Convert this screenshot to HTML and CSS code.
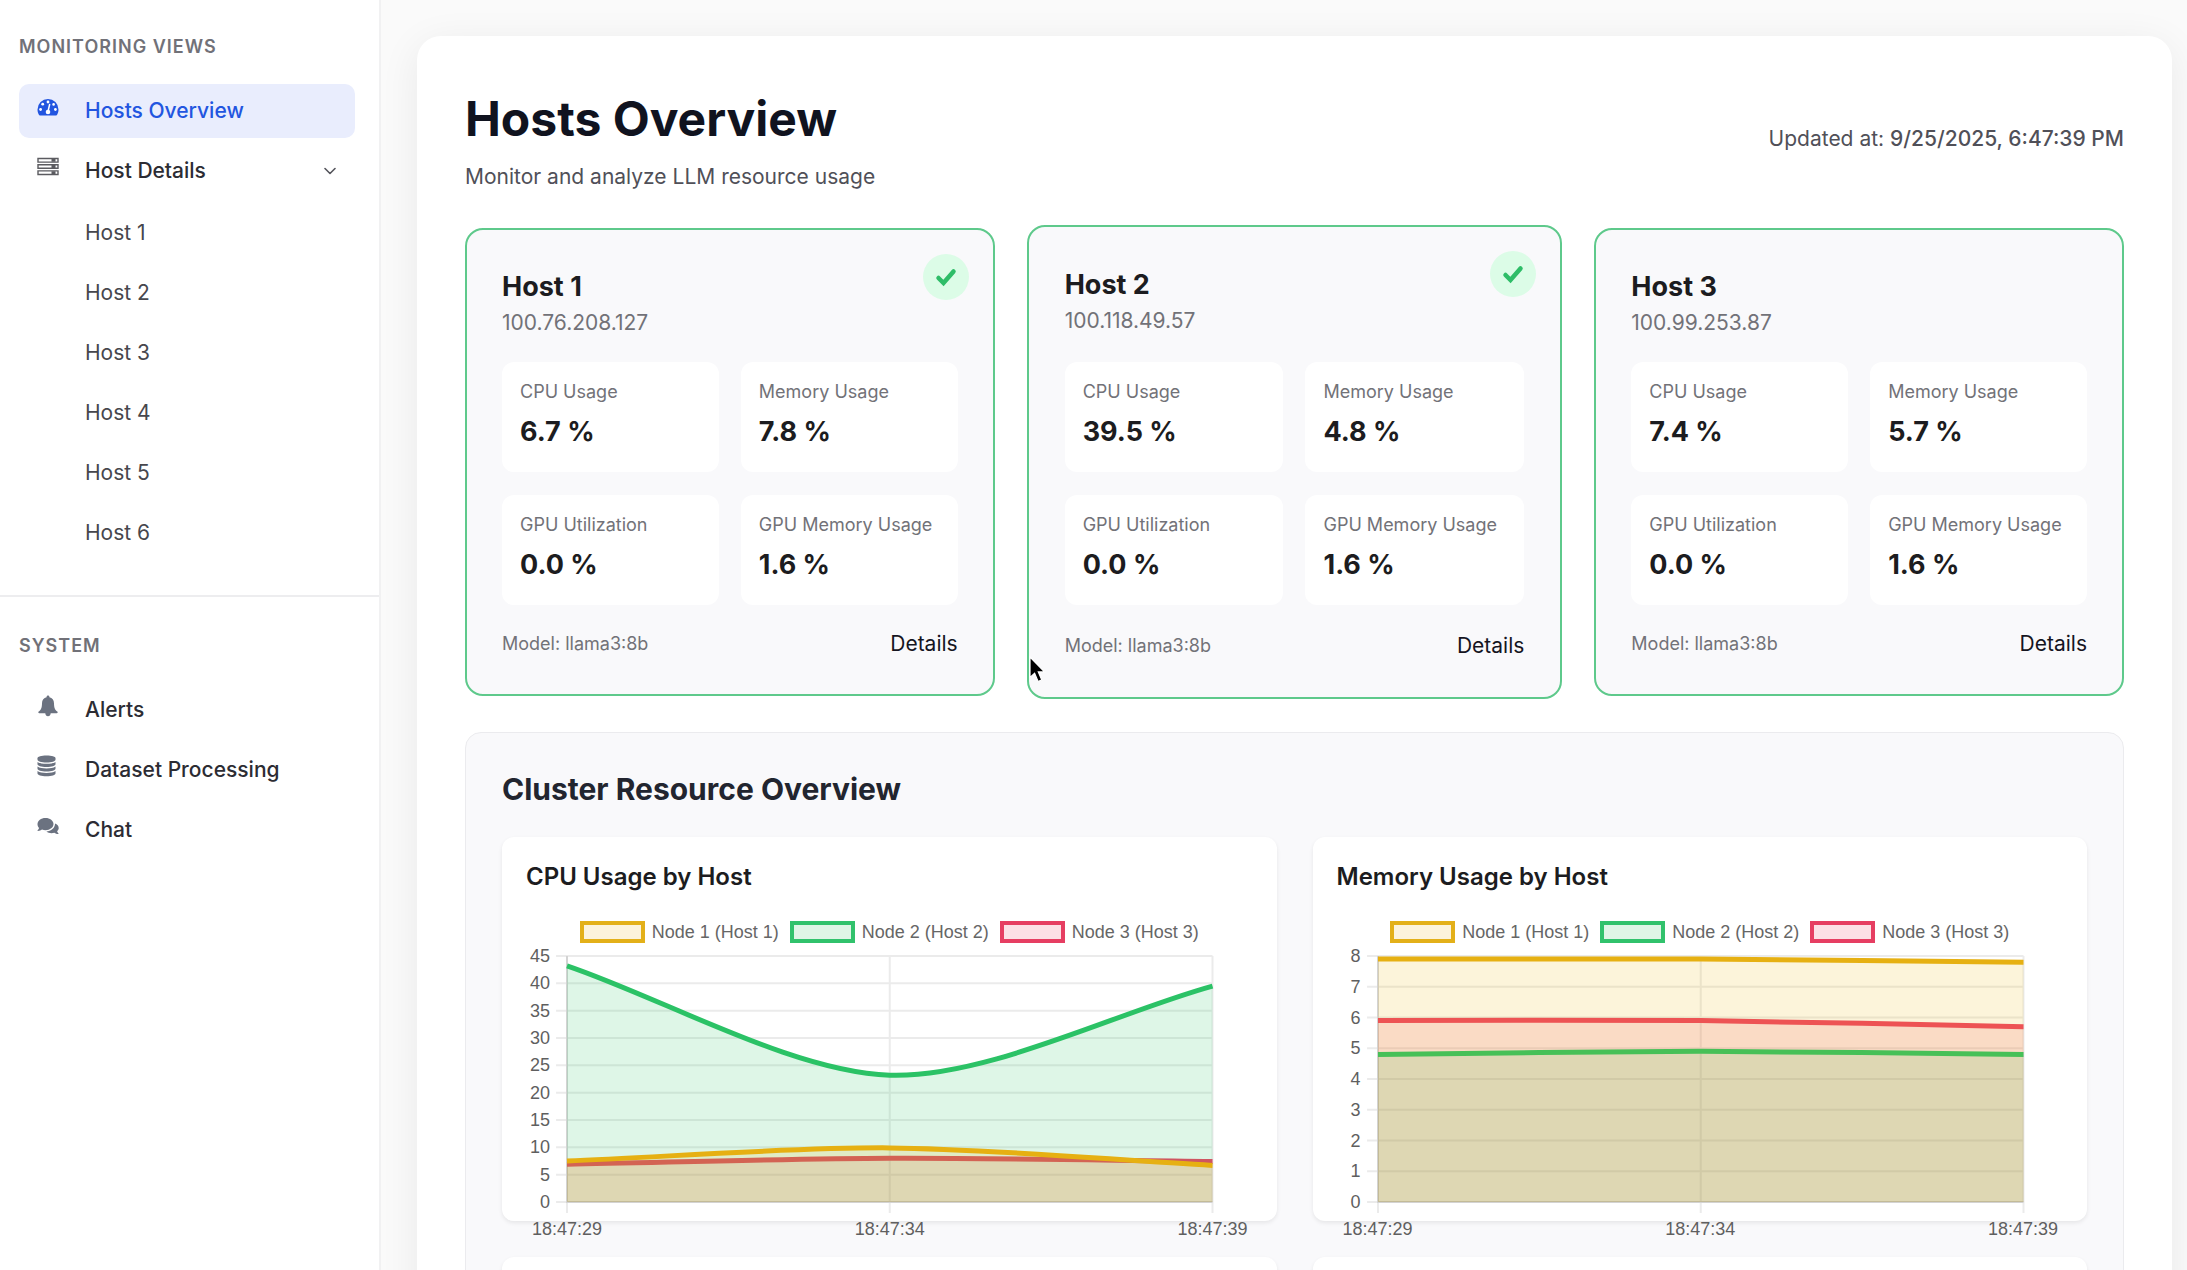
FILE: index.html
```html
<!DOCTYPE html>
<html lang="en">
<head>
<meta charset="utf-8">
<title>Hosts Overview</title>
<link rel="stylesheet" href="styles.css">
</head>
<body>
<div class="layout">
  <aside class="sidebar">
    <nav class="section" aria-labelledby="views-title">
      <h2 class="section-title" id="views-title">MONITORING VIEWS</h2>
      <ul class="nav">
        <li><a class="nav-item active" href="#overview">
          <svg class="nav-icon" viewBox="0 0 22 22"><path fill="currentColor" d="M11 3A10.500 10.500 0 0 0 .5 13.500c0 2 .5 3.700 1.400 5.300.2.400.6.600 1 .6h16.200c.4 0 .8-.2 1-.6.900-1.600 1.400-3.300 1.400-5.300A10.500 10.500 0 0 0 11 3z"/><g fill="#fff"><circle cx="11" cy="6" r="1.400"/><circle cx="5.700" cy="8.200" r="1.400"/><circle cx="3.600" cy="13.500" r="1.400"/><circle cx="18.400" cy="13.500" r="1.400"/><circle cx="16.600" cy="8.400" r="1.300"/><circle cx="11" cy="16" r="2.300"/></g><path d="M11 15.500L12.600 8.500" stroke="#fff" stroke-width="1.500" stroke-linecap="round"/></svg>
          Hosts Overview</a></li>
        <li><a class="nav-item" href="#details">
          <svg class="nav-icon" viewBox="0 0 22 22" fill="none" stroke="#5b5b60" stroke-width="1.400"><path d="M1 2.500h20v3.600H1zM1 8.700h20v3.600H1zM1 14.900h20v3.600H1z"/><path stroke-width="3" d="M14.500 4.300h4M14.500 10.500h4M14.500 16.700h4"/></svg>
          Host Details
          <svg class="chevron" viewBox="0 0 12 8"><path d="M1 1.500l5 5 5-5" fill="none" stroke="currentColor" stroke-width="1.600" stroke-linecap="round" stroke-linejoin="round"/></svg></a>
          <ul class="nav subnav">
            <li><a class="nav-item" href="#host1">Host 1</a></li>
            <li><a class="nav-item" href="#host2">Host 2</a></li>
            <li><a class="nav-item" href="#host3">Host 3</a></li>
            <li><a class="nav-item" href="#host4">Host 4</a></li>
            <li><a class="nav-item" href="#host5">Host 5</a></li>
            <li><a class="nav-item" href="#host6">Host 6</a></li>
          </ul></li>
      </ul>
    </nav>
    <nav class="section" aria-labelledby="system-title">
      <h2 class="section-title" id="system-title">SYSTEM</h2>
      <ul class="nav">
        <li><a class="nav-item" href="#alerts">
          <svg class="nav-icon" viewBox="0 0 22 22"><path fill="currentColor" d="M11 .5c-.8 0-1.400.6-1.400 1.400v.4C6.800 2.900 5 5.300 5 8.200c0 4.600-1 6.700-3.300 8.400-.8.700-.4 1.700.6 1.700h6c.1 1.800 1.200 3 2.700 3s2.600-1.200 2.700-3h6c1 0 1.400-1 .6-1.700C18 14.900 17 12.800 17 8.200c0-2.900-1.800-5.300-4.600-5.900v-.4C12.400 1.100 11.800.5 11 .5z"/></svg>
          Alerts</a></li>
        <li><a class="nav-item" href="#dataset">
          <svg class="nav-icon" viewBox="0 0 22 22" fill="currentColor"><path d="M.5 3.200C.5 1.600 4.200.5 9.500.5s9 1.100 9 2.700v1.500c0 1.500-3.700 2.700-9 2.700s-9-1.200-9-2.700z"/><path d="M.5 6.900c2 1.400 5.200 1.900 9 1.900s7-.5 9-1.900v2.300c0 1.500-3.700 2.700-9 2.700s-9-1.200-9-2.700z"/><path d="M.5 11.500c2 1.400 5.200 1.900 9 1.900s7-.5 9-1.900v2.300c0 1.500-3.700 2.700-9 2.700s-9-1.200-9-2.700z"/><path d="M.5 16c2 1.400 5.200 1.900 9 1.900s7-.5 9-1.900v2.500c0 1.500-3.700 2.700-9 2.700s-9-1.200-9-2.700z"/></svg>
          Dataset Processing</a></li>
        <li><a class="nav-item" href="#chat">
          <svg class="nav-icon" viewBox="0 0 22 22" fill="currentColor"><path d="M8.500 3C4 3 .5 5.700.5 9.200c0 1.400.6 2.700 1.600 3.700-.3 1-.9 1.800-1.500 2.400-.3.300-.1.600.3.600 1.700 0 3.100-.6 4.100-1.300 1.100.4 2.300.6 3.500.6 4.500 0 8-2.700 8-6.100S13 3 8.500 3z"/><path d="M18 8.500c.2 4.500-4 7.700-8.600 8.100 1.300 1.100 3.200 1.700 5.100 1.700 1 0 2-.2 2.900-.5 1.100.8 2.300 1.300 3.800 1.300.4 0 .5-.4.3-.7-.6-.6-1.100-1.300-1.400-2.200 1-1 1.600-2 1.600-3.300 0-1.900-1.400-3.600-3.700-4.400z"/></svg>
          Chat</a></li>
      </ul>
    </nav>
  </aside>

  <main class="panel">
    <header class="page-head">
      <div>
        <h1 class="page-title">Hosts Overview</h1>
        <p class="subtitle">Monitor and analyze LLM resource usage</p>
      </div>
      <p class="updated">Updated at: <time class="time">9/25/2025, 6:47:39 PM</time></p>
    </header>

    <div class="hosts">
      <article class="host">
        <span class="status"><svg class="tick" viewBox="0 0 22 22"><path d="M3.500 12l5 5L18.500 5.500" fill="none" stroke="currentColor" stroke-width="4.500" stroke-linecap="round"/></svg></span>
        <div class="host-head"><h2 class="host-name">Host 1</h2><p class="host-ip">100.76.208.127</p></div>
        <dl class="metrics">
          <div class="metric"><dt>CPU Usage</dt><dd>6.7 %</dd></div>
          <div class="metric"><dt>Memory Usage</dt><dd>7.8 %</dd></div>
          <div class="metric"><dt>GPU Utilization</dt><dd>0.0 %</dd></div>
          <div class="metric"><dt>GPU Memory Usage</dt><dd>1.6 %</dd></div>
        </dl>
        <footer class="host-foot"><span>Model: llama3:8b</span><a class="details" href="#host1">Details</a></footer>
      </article>
      <article class="host hovered">
        <span class="status"><svg class="tick" viewBox="0 0 22 22"><path d="M3.500 12l5 5L18.500 5.500" fill="none" stroke="currentColor" stroke-width="4.500" stroke-linecap="round"/></svg></span>
        <div class="host-head"><h2 class="host-name">Host 2</h2><p class="host-ip">100.118.49.57</p></div>
        <dl class="metrics">
          <div class="metric"><dt>CPU Usage</dt><dd>39.5 %</dd></div>
          <div class="metric"><dt>Memory Usage</dt><dd>4.8 %</dd></div>
          <div class="metric"><dt>GPU Utilization</dt><dd>0.0 %</dd></div>
          <div class="metric"><dt>GPU Memory Usage</dt><dd>1.6 %</dd></div>
        </dl>
        <footer class="host-foot"><span>Model: llama3:8b</span><a class="details" href="#host2">Details</a></footer>
        <svg class="cursor" viewBox="0 0 18 28"><path d="M1 1v20.500l4.600-4.200 3.500 8.200 3.700-1.600-3.500-8h6.200z" fill="#000" stroke="#fff" stroke-width="1.200"/></svg>
      </article>
      <article class="host">
        <div class="host-head"><h2 class="host-name">Host 3</h2><p class="host-ip">100.99.253.87</p></div>
        <dl class="metrics">
          <div class="metric"><dt>CPU Usage</dt><dd>7.4 %</dd></div>
          <div class="metric"><dt>Memory Usage</dt><dd>5.7 %</dd></div>
          <div class="metric"><dt>GPU Utilization</dt><dd>0.0 %</dd></div>
          <div class="metric"><dt>GPU Memory Usage</dt><dd>1.6 %</dd></div>
        </dl>
        <footer class="host-foot"><span>Model: llama3:8b</span><a class="details" href="#host3">Details</a></footer>
      </article>
    </div>

    <section class="cluster">
      <h2 class="cluster-title">Cluster Resource Overview</h2>
      <div class="charts">
        <article class="chart">
          <h3 class="chart-title">CPU Usage by Host</h3>
          <ul class="legend">
            <li><span class="key key-1"></span>Node 1 (Host 1)</li>
            <li><span class="key key-2"></span>Node 2 (Host 2)</li>
            <li><span class="key key-3"></span>Node 3 (Host 3)</li>
          </ul>
          <div class="plot">
            <div class="y-axis"><span>45</span><span>40</span><span>35</span><span>30</span><span>25</span><span>20</span><span>15</span><span>10</span><span>5</span><span>0</span></div>
            <svg class="canvas" viewBox="0 0 646 246" preserveAspectRatio="none">
              <path class="grid" d="M-11 0H646M-11 27.333H646M-11 54.667H646M-11 82H646M-11 109.333H646M-11 136.667H646M-11 164H646M-11 191.333H646M-11 218.667H646M-11 246H646M0 0V257M323 0V257M646 0V257"/>
              <path class="axis" d="M0 0V246H646"/>
              <path class="area-3" d="M0 208.300C97 206.500 226 202.700 323 202.300C420 201.900 549 204.500 646 205.500V246H0Z"/>
              <path class="line-3" d="M0 208.300C97 206.500 226 202.700 323 202.300C420 201.900 549 204.500 646 205.500"/>
              <path class="area-2" d="M0 9.800C97 42.600 226 116.200 323 119.200C420 122.200 549 56.800 646 30.100V246H0Z"/>
              <path class="line-2" d="M0 9.800C97 42.600 226 116.200 323 119.200C420 122.200 549 56.800 646 30.100"/>
              <path class="area-1" d="M0 205C97 201.100 226 191.200 323 191.900C420 192.600 549 204.200 646 209.400V246H0Z"/>
              <path class="line-1" d="M0 205C97 201.100 226 191.200 323 191.900C420 192.600 549 204.200 646 209.400"/>
            </svg>
            <div class="x-axis"><span>18:47:29</span><span>18:47:34</span><span>18:47:39</span></div>
          </div>
        </article>
        <article class="chart">
          <h3 class="chart-title">Memory Usage by Host</h3>
          <ul class="legend">
            <li><span class="key key-1"></span>Node 1 (Host 1)</li>
            <li><span class="key key-2"></span>Node 2 (Host 2)</li>
            <li><span class="key key-3"></span>Node 3 (Host 3)</li>
          </ul>
          <div class="plot">
            <div class="y-axis"><span>8</span><span>7</span><span>6</span><span>5</span><span>4</span><span>3</span><span>2</span><span>1</span><span>0</span></div>
            <svg class="canvas" viewBox="0 0 646 246" preserveAspectRatio="none">
              <path class="grid" d="M-11 0H646M-11 30.750H646M-11 61.500H646M-11 92.250H646M-11 123H646M-11 153.750H646M-11 184.500H646M-11 215.250H646M-11 246H646M0 0V257M323 0V257M646 0V257"/>
              <path class="axis" d="M0 0V246H646"/>
              <path class="area-3" d="M0 64.600C97 64.600 226 63.700 323 64.600C420 65.500 549 68.900 646 70.700V246H0Z"/>
              <path class="line-3" d="M0 64.600C97 64.600 226 63.700 323 64.600C420 65.500 549 68.900 646 70.700"/>
              <path class="area-2" d="M0 98.400C97 97.500 226 95.300 323 95.300C420 95.300 549 97.500 646 98.400V246H0Z"/>
              <path class="line-2" d="M0 98.400C97 97.500 226 95.300 323 95.300C420 95.300 549 97.500 646 98.400"/>
              <path class="area-1" d="M0 3.100C97 3.100 226 2.600 323 3.100C420 3.600 549 5.300 646 6.200V246H0Z"/>
              <path class="line-1" d="M0 3.100C97 3.100 226 2.600 323 3.100C420 3.600 549 5.300 646 6.200"/>
            </svg>
            <div class="x-axis"><span>18:47:29</span><span>18:47:34</span><span>18:47:39</span></div>
          </div>
        </article>
        <article class="chart"></article>
        <article class="chart"></article>
      </div>
    </section>
  </main>
</div>
</body>
</html>
```
FILE: styles.css
```css
* { box-sizing: border-box; margin: 0; padding: 0; }
html, body { height: 100%; overflow: hidden; }
body { font-family: Inter, "Liberation Sans", sans-serif; font-size: 21px; line-height: 32px; color: #1c1c20; background: #fafafa; }
ul { list-style: none; }
a { color: inherit; text-decoration: none; }

.layout { display: flex; align-items: stretch; height: 100vh; }

/* Sidebar */
.sidebar { flex: none; width: 381px; background: #fff; border-right: 2px solid #f1f1f2; }
.section { padding: 33px 24px 35px 19px; }
.section + .section { border-top: 2px solid #ededef; padding-top: 35px; }
.section-title { font-size: 18px; line-height: 28px; font-weight: 600; letter-spacing: 1px; color: #717178; margin-bottom: 23px; }
.nav { display: flex; flex-direction: column; gap: 6px; }
.subnav { padding-top: 8px; }
.nav-item { display: flex; align-items: center; height: 54px; padding: 0 19px 0 18px; border-radius: 10px; font-weight: 500; color: #2c2c33; }
.nav-item.active { background: #e9edfd; color: #2255e0; }
.subnav .nav-item { padding-left: 66px; font-weight: 400; color: #47474d; }
.nav-icon { width: 22px; height: 22px; margin: 0 26px 9px 0; color: #6b7280; }
.active .nav-icon { color: #2255e0; }
.chevron { width: 12px; height: 8px; margin-left: auto; color: #55555c; }

/* Main panel */
.panel { flex: 1; align-self: flex-start; min-width: 0; margin: 36px 15px 0 36px; padding: 49px 48px; background: #fff; border-radius: 24px; box-shadow: 0 8px 40px rgba(0, 0, 0, .07); }
.page-head { display: flex; align-items: center; justify-content: space-between; margin-bottom: 35px; }
.page-title { font-size: 48px; line-height: 68px; font-weight: 700; color: #10131f; }
.subtitle { margin-top: 8px; color: #505058; }
.updated { color: #505058; }
.time { font-weight: 500; }

/* Host cards */
.hosts { display: grid; grid-template-columns: repeat(3, 1fr); gap: 35px; margin-bottom: 36px; }
.host { position: relative; display: flex; flex-direction: column; justify-content: space-between; min-height: 468px; padding: 37px 35px 34px; border: 2px solid #5ec98b; border-radius: 18px; background: #f9f9fb; }
.host.hovered { margin: -3px; padding: 38px 36px 35px; }
.status { position: absolute; top: 24px; right: 24px; display: grid; place-items: center; width: 46px; height: 46px; border-radius: 50%; background: #dcfce7; }
.tick { width: 22px; height: 22px; color: #2ebd68; }
.host-name { font-size: 27px; line-height: 40px; font-weight: 700; }
.host-ip { color: #727278; }
.metrics { display: grid; grid-template-columns: 1fr 1fr; gap: 23px 22px; }
.metric { height: 110px; padding: 16px 18px; border-radius: 12px; background: #fff; }
.metric dt { font-size: 18px; line-height: 28px; color: #727278; white-space: nowrap; }
.metric dd { margin-top: 8px; font-size: 27px; line-height: 36px; font-weight: 700; }
.host-foot { display: flex; align-items: center; justify-content: space-between; font-size: 18px; color: #727278; }
.details { font-size: 21px; color: #15151f; }
.cursor { position: absolute; left: 0; top: 429px; width: 18px; height: 28px; }

/* Cluster charts */
.cluster { padding: 36px; border: 1px solid #ebebee; border-radius: 16px; background: #f9f9fb; }
.cluster-title { font-size: 30px; line-height: 40px; font-weight: 700; color: #22252f; margin-bottom: 28px; }
.charts { display: grid; grid-template-columns: 1fr 1fr; gap: 36px; }
.chart { height: 384px; padding: 24px; border-radius: 12px; background: #fff; box-shadow: 0 2px 4px rgba(0, 0, 0, .08); }
.chart-title { font-size: 24px; line-height: 32px; font-weight: 600; margin-bottom: 28px; }
.legend { display: flex; justify-content: center; gap: 11px; height: 22px; font: 18px/22px "Liberation Sans", sans-serif; color: #666; }
.legend li { display: flex; gap: 7px; }
.key { width: 65px; height: 22px; border: 4px solid; }
.key-1 { border-color: #e3b019; background: #fcf3dc; }
.key-2 { border-color: #31c26c; background: #dff5e6; }
.key-3 { border-color: #e63e62; background: #fce0e6; }
.plot { display: grid; grid-template-columns: 24px 1fr; grid-template-rows: 246px auto; column-gap: 17px; margin: 13px 40px 0 0; font: 18px/20px "Liberation Sans", sans-serif; color: #5f5f5f; }
.y-axis { display: flex; flex-direction: column; justify-content: space-between; margin: -10px 0; text-align: right; }
.canvas { width: 100%; height: 100%; overflow: visible; }
.canvas path { vector-effect: non-scaling-stroke; fill: none; }
.canvas .grid { stroke: rgba(0, 0, 0, .08); stroke-width: 2; }
.canvas .axis { stroke: rgba(0, 0, 0, .1); stroke-width: 2; }
.canvas .line-1 { stroke: #e6b012; stroke-width: 5; }
.canvas .line-2 { stroke: #2bc266; stroke-width: 5; }
.canvas .line-3 { stroke: #ee4262; stroke-width: 5; }
.canvas .area-1 { fill: rgba(234, 179, 8, .15); }
.canvas .area-2 { fill: rgba(34, 197, 94, .15); }
.canvas .area-3 { fill: rgba(244, 63, 94, .15); }
.x-axis { grid-column: 2; display: flex; justify-content: space-between; margin: 17px -40px 0; }
.x-axis span { width: 80px; text-align: center; }
```
